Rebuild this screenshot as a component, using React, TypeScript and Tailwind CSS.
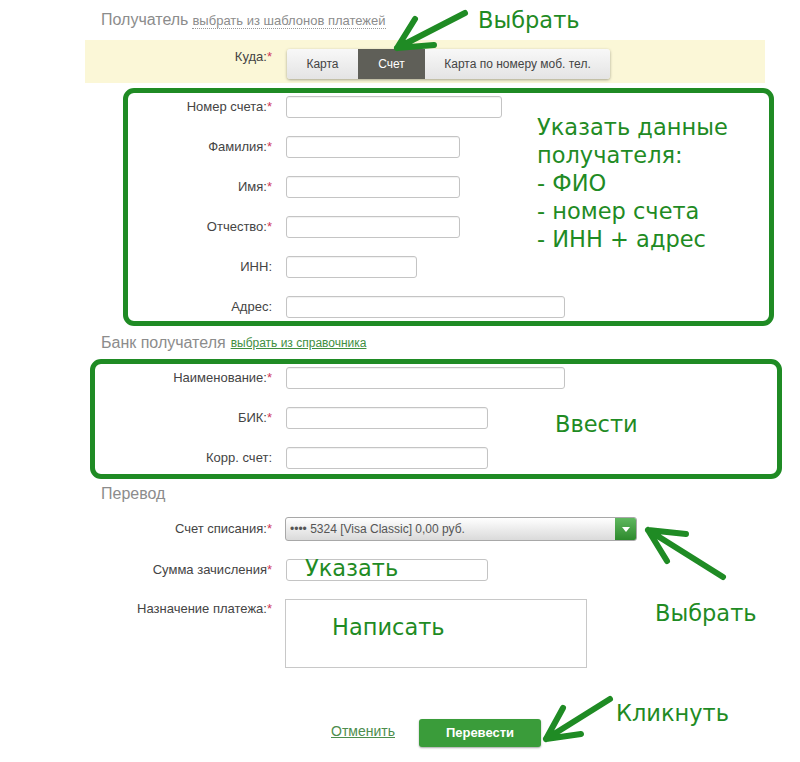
import React from 'react';

// Annotation style (green hand-written notes over the screenshot)
const note =
  "font-['DejaVu_Sans',Verdana,sans-serif] text-[22.5px] leading-[28px] text-[#1f8b24] whitespace-nowrap";

function Req() {
  return <span className="text-[#d0365a]">*</span>;
}

interface RowProps {
  label: string;
  required?: boolean;
  labelClass: string;
  inputClass: string;
}

function FieldRow({ label, required, labelClass, inputClass }: RowProps) {
  return (
    <div className="flex items-center h-[22px] shrink-0">
      <div className={`${labelClass} text-right text-[13px] leading-[16px] text-[#444]`}>
        {label}
        {required && <Req />}
      </div>
      <div
        className={`${inputClass} h-[22px] rounded-[3px] border border-[#c4c4c4] bg-white shadow-[inset_0_1px_1px_rgba(0,0,0,0.06)]`}
      />
    </div>
  );
}

export default function App() {
  return (
    <div className="relative w-[800px] h-[762px] overflow-hidden bg-white font-['Liberation_Sans',Arial,sans-serif]">
      {/* Получатель */}
      <div className="flex items-center h-[40px] pl-[101px]">
        <div className="w-[377px] flex items-baseline">
          <span className="text-[16px] text-[#8c8c8c]">Получатель</span>
          <span className="ml-[4px] text-[13px] leading-[14px] text-[#8c8c8c] border-b border-dotted border-[#999]">
            выбрать из шаблонов платежей
          </span>
        </div>
        <span className={note}>Выбрать</span>
      </div>

      {/* Куда */}
      <div className="ml-[85px] w-[680px] h-[43px] bg-[#fbf7d7] flex">
        <div className="w-[187px] pt-[9px] text-right text-[13px] leading-[16px] text-[#444]">
          Куда:<Req />
        </div>
        <div className="ml-[15px] mt-[9px] flex h-[30px] rounded-[3px] bg-linear-to-b from-[#f8f8f8] to-[#e4e4e4] shadow-[0_1px_3px_rgba(0,0,0,0.35)] text-[12px] text-[#444]">
          <div className="w-[71px] flex items-center justify-center">Карта</div>
          <div className="w-[67px] flex items-center justify-center bg-[#5f5f58] text-white">Счет</div>
          <div className="w-[185px] flex items-center justify-center">Карта по номеру моб. тел.</div>
        </div>
      </div>

      {/* Recipient fields */}
      <div className="relative mt-[5px] ml-[123px] w-[651px] h-[238px] border-[5px] border-[#1f8b24] rounded-[11px] pt-[3px] flex flex-col gap-[18px]">
        <FieldRow label="Номер счета:" required labelClass="w-[158px] pr-[14px]" inputClass="w-[216px]" />
        <FieldRow label="Фамилия:" required labelClass="w-[158px] pr-[14px]" inputClass="w-[174px]" />
        <FieldRow label="Имя:" required labelClass="w-[158px] pr-[14px]" inputClass="w-[174px]" />
        <FieldRow label="Отчество:" required labelClass="w-[158px] pr-[14px]" inputClass="w-[174px]" />
        <FieldRow label="ИНН:" labelClass="w-[158px] pr-[14px]" inputClass="w-[131px]" />
        <FieldRow label="Адрес:" labelClass="w-[158px] pr-[14px]" inputClass="w-[279px]" />
        <div className={`absolute left-[409px] top-[20px] ${note}`}>
          <div>Указать данные</div>
          <div>получателя:</div>
          <div>- ФИО</div>
          <div>- номер счета</div>
          <div>- ИНН + адрес</div>
        </div>
      </div>

      {/* Банк получателя */}
      <div className="flex items-center h-[33px] pl-[101px]">
        <span className="text-[16px] text-[#8c8c8c]">Банк получателя</span>
        <span className="ml-[5px] text-[12px] text-[#3f8f3f] underline">выбрать из справочника</span>
      </div>

      <div className="relative ml-[90px] w-[692px] h-[120px] border-[5px] border-[#1f8b24] rounded-[11px] pt-[3px] flex flex-col gap-[18px]">
        <FieldRow label="Наименование:" required labelClass="w-[191px] pr-[14px]" inputClass="w-[279px]" />
        <FieldRow label="БИК:" required labelClass="w-[191px] pr-[14px]" inputClass="w-[202px]" />
        <FieldRow label="Корр. счет:" labelClass="w-[191px] pr-[14px]" inputClass="w-[202px]" />
        <div className={`absolute left-[460px] top-[46px] ${note}`}>Ввести</div>
      </div>

      {/* Перевод */}
      <div className="flex items-center h-[30px] pl-[101px]">
        <span className="text-[16px] text-[#8c8c8c]">Перевод</span>
      </div>

      <div className="mt-[8px] flex items-center h-[24px]">
        <div className="w-[272px] text-right text-[13px] leading-[16px] text-[#444]">
          Счет списания:<Req />
        </div>
        <div className="ml-[13px] w-[352px] h-[24px] flex rounded-[3px] border border-[#a8a8a8] bg-linear-to-b from-white to-[#dadada] overflow-hidden">
          <div className="flex-1 flex items-center pl-[4px] text-[12px] text-[#555]">
            •••• 5324 [Visa Classic] 0,00 руб.
          </div>
          <div className="w-[21px] bg-linear-to-b from-[#5fb85f] to-[#2c8a2c] flex items-center justify-center">
            <svg width="8" height="5" viewBox="0 0 8 5">
              <path d="M0 0h8L4 5z" fill="white" />
            </svg>
          </div>
        </div>
      </div>

      <div className="mt-[18px] flex items-center h-[22px]">
        <div className="w-[272px] text-right text-[13px] leading-[16px] text-[#444]">
          Сумма зачисления<Req />
        </div>
        <div className="relative ml-[14px] w-[202px] h-[22px] rounded-[3px] border border-[#c4c4c4] bg-white">
          <span className={`absolute left-[18px] top-[-6px] ${note}`}>Указать</span>
        </div>
      </div>

      <div className="mt-[18px] flex items-start">
        <div className="w-[272px] pt-[2px] text-right text-[13px] leading-[16px] text-[#444]">
          Назначение платежа:<Req />
        </div>
        <div className="relative ml-[13px] w-[302px] h-[69px] border border-[#c8c8c8] bg-white">
          <span className={`absolute left-[46px] top-[13px] ${note}`}>Написать</span>
        </div>
        <span className={`ml-[68px] ${note}`}>Выбрать</span>
      </div>

      {/* Actions */}
      <div className="mt-[31px] flex items-start">
        <span className="ml-[331px] mt-[24px] text-[14px] leading-[16px] text-[#4d8d4d] underline">Отменить</span>
        <button className="ml-[24px] mt-[20px] w-[122px] h-[28px] rounded-[3px] bg-[#3a9c3a] text-white text-[13px] font-bold shadow-[0_1px_2px_rgba(0,0,0,0.35)]">
          Перевести
        </button>
        <span className={`ml-[75px] ${note}`}>Кликнуть</span>
      </div>

      {/* Arrows */}
      <svg className="absolute inset-0 pointer-events-none" width="800" height="762">
        <g stroke="#1f8b24" strokeWidth="6" strokeLinecap="round" strokeLinejoin="round" fill="none">
          <path d="M465 13 L397 48 M397 48 L415 19 M397 48 L434 45" />
          <path d="M723 577 L648 530 M648 530 L686 534 M648 530 L667 561" />
          <path d="M610 699 L546 739 M546 739 L563 708 M546 739 L581 734" />
        </g>
      </svg>
    </div>
  );
}
